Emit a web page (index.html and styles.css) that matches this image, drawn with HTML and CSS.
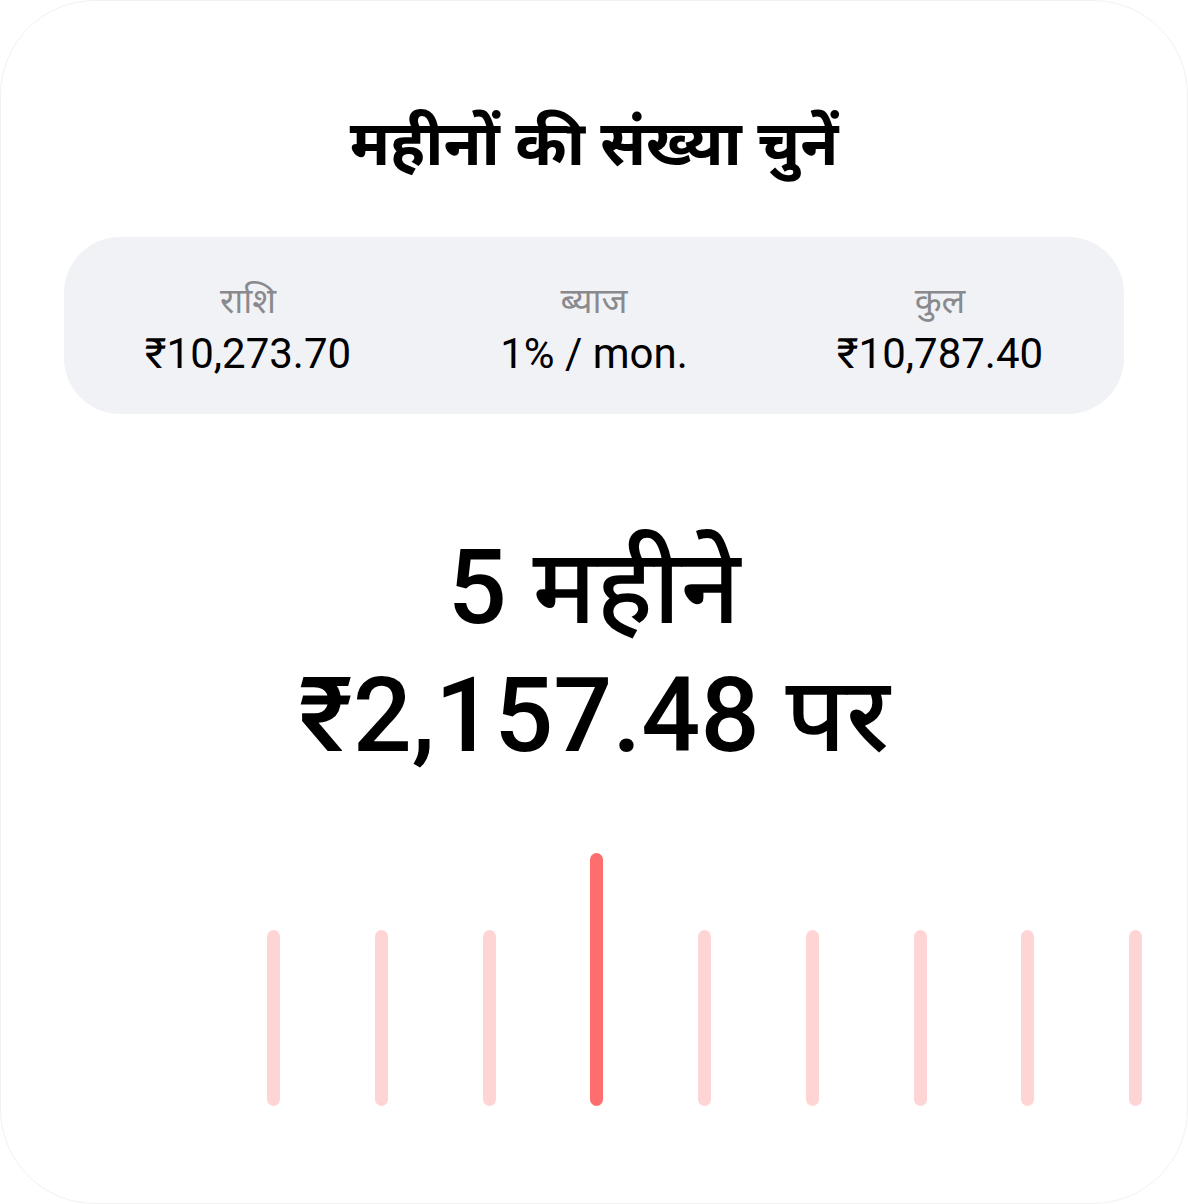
FILE: index.html
```html
<!DOCTYPE html>
<html lang="hi">
<head>
  <meta charset="UTF-8">
  <meta name="viewport" content="width=device-width, initial-scale=1.0">
  <title>महीनों की संख्या चुनें</title>
  <link rel="stylesheet" href="styles.css">
</head>
<body>
  <div class="sheet">
    <h1 class="title">महीनों की संख्या चुनें</h1>

    <div class="summary">
      <div class="summary-item">
        <div class="summary-label">राशि</div>
        <div class="summary-value">₹10,273.70</div>
      </div>
      <div class="summary-item">
        <div class="summary-label">ब्याज</div>
        <div class="summary-value">1% / mon.</div>
      </div>
      <div class="summary-item">
        <div class="summary-label">कुल</div>
        <div class="summary-value">₹10,787.40</div>
      </div>
    </div>

    <div class="result">
      <div class="result-line">5 महीने</div>
      <div class="result-line">₹2,157.48 पर</div>
    </div>

    <div class="ruler">
      <span class="tick"></span>
      <span class="tick"></span>
      <span class="tick"></span>
      <span class="tick active"></span>
      <span class="tick"></span>
      <span class="tick"></span>
      <span class="tick"></span>
      <span class="tick"></span>
      <span class="tick"></span>
    </div>
  </div>
</body>
</html>
```

FILE: styles.css
```css
body {
  font-family: Roboto, "Noto Sans Devanagari", "Noto Sans", sans-serif;
  background-color: #FFFFFF;
  margin: 0;
  padding: 0;
  color: #000000;
}

.sheet {
  box-sizing: border-box;
  width: 1188px;
  height: 1204px;
  background-color: #FFFFFF;
  border: 1px solid #F1F1F1;
  border-radius: 95px;
  overflow: hidden;
  display: flex;
  flex-direction: column;
  align-items: center;
}

.title {
  margin: 0;
  padding-top: 98px;
  font-size: 62px;
  font-weight: 700;
  line-height: 90px;
  text-align: center;
}

.summary {
  align-self: stretch;
  margin: 48px 63px 0;
  height: 177px;
  padding: 8px 11px 0;
  box-sizing: border-box;
  background-color: #F1F2F6;
  border-radius: 56px;
  display: grid;
  grid-template-columns: repeat(3, 1fr);
  align-items: center;
}

.summary-item {
  text-align: center;
}

.summary-label {
  font-size: 35px;
  line-height: 48px;
  color: #8A8A8E;
}

.summary-value {
  font-size: 42px;
  line-height: 56px;
}

.result {
  margin-top: 104px;
  text-align: center;
  font-size: 104px;
  font-weight: 500;
  line-height: 128px;
}

.result-line:first-child {
  padding-top: 6px;
}

.ruler {
  align-self: stretch;
  margin-top: auto;
  margin-bottom: 97px;
  padding-left: 266px;
  display: flex;
  align-items: flex-end;
  gap: 94.75px;
  height: 253px;
}

.tick {
  flex: none;
  width: 13px;
  height: 176px;
  border-radius: 7px;
  background-color: #FFD4D4;
}

.tick.active {
  height: 253px;
  background-color: #FF6E6E;
}
```
